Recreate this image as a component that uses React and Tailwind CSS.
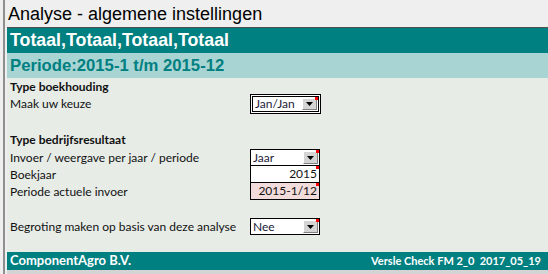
import React from "react";

const lato = { fontFamily: "Lato, 'Liberation Sans', sans-serif" };
const arial = { fontFamily: "'Liberation Sans', Arial, sans-serif" };

function RedMark() {
  return <span className="absolute right-0 top-0 w-[3px] h-[3px] bg-[#ff0000]" />;
}

function DropBtn() {
  return (
    <span className="absolute right-[1px] top-[1px] bottom-[1px] w-[15px] bg-[#d4d4d4] border-t border-l border-t-white border-l-white border-b border-r border-b-[#808080] border-r-[#808080] flex items-center justify-center">
      <svg width="7" height="4" viewBox="0 0 7 4"><path d="M0 0h7L3.5 4z" fill="#000" /></svg>
    </span>
  );
}

function Row({ h, children, bold }) {
  return (
    <div className={`flex items-center ${h} pl-[3px] ${bold ? "font-bold" : ""}`}>{children}</div>
  );
}

export default function App() {
  return (
    <div className="w-[548px] h-[274px] bg-[#efefef] flex overflow-hidden text-[12px] text-[#111]" style={lato}>
      <div className="w-[3px]" />
      <div className="w-[2px] bg-[#8f8f8f]" />
      <div className="w-[2px]" />
      <div className="flex-1 flex flex-col">
        <div className="h-[27px] flex items-center pl-[1px] pt-[1px] text-[18px] text-black" style={arial}>
          Analyse - algemene instellingen
        </div>
        <div className="h-[26px] bg-[#008080] border-t border-[#505050] flex items-center pl-[3px] text-white font-bold text-[17.8px]" style={arial}>
          Totaal,Totaal,Totaal,Totaal
        </div>
        <div className="h-[25px] bg-[#a8d4d4] flex items-center pl-[3px] text-[#008080] font-bold text-[16.7px]" style={arial}>
          Periode:2015-1 t/m 2015-12
        </div>
        <div className="h-[174px] bg-[#e7ece7] flex flex-col">
          <Row h="h-[17px]" bold>Type boekhouding</Row>
          <div className="flex items-center h-[17px] pl-[3px]">
            <span className="w-[240px]">Maak uw keuze</span>
            <div className="relative w-[71px] h-[20px] border border-black bg-white p-[1px]">
              <div className="relative h-full border border-black flex items-center pl-[2px] text-[#1a1a3a]">
                Jan/Jan
                <DropBtn />
                <RedMark />
              </div>
            </div>
          </div>
          <div className="h-[19px]" />
          <Row h="h-[18px]" bold>Type bedrijfsresultaat</Row>
          <div className="flex">
            <div className="w-[243px] flex flex-col pl-[3px]">
              <div className="h-[17px] flex items-center">Invoer / weergave per jaar / periode</div>
              <div className="h-[17px] flex items-center">Boekjaar</div>
              <div className="h-[17px] flex items-center">Periode actuele invoer</div>
            </div>
            <div className="w-[70px] flex flex-col border border-black">
              <div className="relative h-[16px] bg-white border-b border-black flex items-center pl-[2px] text-[#1a1a3a]">
                Jaar
                <DropBtn />
                <RedMark />
              </div>
              <div className="relative h-[17px] bg-white border-b border-black flex items-center justify-end pr-[2px]">
                2015
                <RedMark />
              </div>
              <div className="relative h-[16px] bg-[#f2dcdb] flex items-center justify-end pr-[2px]">
                2015-1/12
                <RedMark />
              </div>
            </div>
          </div>
          <div className="h-[18px]" />
          <div className="flex items-center h-[17px] pl-[3px]">
            <span className="w-[240px]">Begroting maken op basis van deze analyse</span>
            <div className="relative w-[70px] h-[17px] border border-black bg-white flex items-center pl-[2px] text-[#1a1a3a]">
              Nee
              <DropBtn />
              <RedMark />
            </div>
          </div>
          <div className="h-[17px]" />
        </div>
        <div className="h-[18px] bg-[#008080] flex items-center justify-between pl-[3px] pr-[7px] text-white font-bold">
          <span className="text-[13px]">ComponentAgro B.V.</span>
          <span className="whitespace-pre text-[11px]">Versle Check FM 2_0  2017_05_19</span>
        </div>
        <div className="flex-1 bg-[#d4d4d4]" />
      </div>
    </div>
  );
}
